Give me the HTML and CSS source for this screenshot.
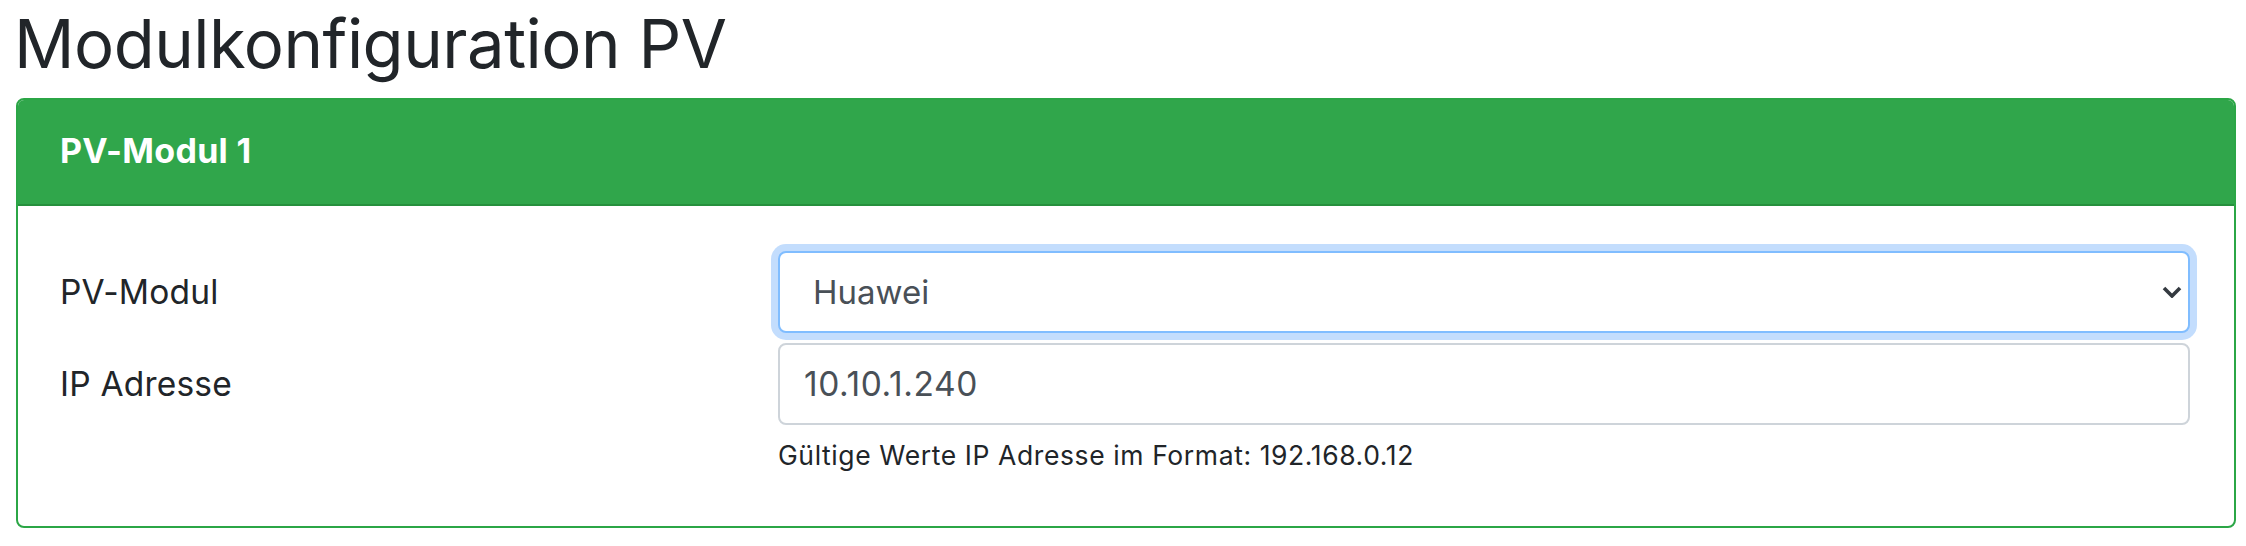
FILE: index.html
```html
<!DOCTYPE html>
<html lang="de">
<head>
<meta charset="utf-8">
<title>Modulkonfiguration PV</title>
<link rel="stylesheet" href="styles.css">
</head>
<body>
<div class="page">
  <h1 class="page-title">Modulkonfiguration PV</h1>
  <div class="card">
    <div class="card-header">PV-Modul 1</div>
    <div class="card-body">
      <div class="form-row">
        <label class="form-label" for="pvmodul">PV-Modul</label>
        <div class="form-field">
          <div class="select-wrap">
            <select id="pvmodul" class="form-select"><option>Huawei</option></select>
            <svg class="select-arrow" width="20" height="12" viewBox="0 0 20 12"><polyline points="2,2 10,10 18,2" fill="none" stroke="#343a40" stroke-width="3.6"/></svg>
          </div>
        </div>
      </div>
      <div class="form-row">
        <label class="form-label" for="ip">IP Adresse</label>
        <div class="form-field">
          <input id="ip" class="form-input" type="text" value="10.10.1.240">
          <small class="help">Gültige Werte IP Adresse im Format: 192.168.0.12</small>
        </div>
      </div>
    </div>
  </div>
</div>
</body>
</html>
```
FILE: styles.css
```css
* { box-sizing: border-box; }
html, body { margin: 0; background: #fff; }
body { font-family: Inter, "Liberation Sans", Arial, sans-serif; color: #212529; }
.page { padding: 0 10px 0 16px; }
.page-title { margin: 2px 0 12px -2px; font-size: 67px; font-weight: 400; letter-spacing: -0.5px; line-height: 84px; color: #212529; }
.card { border: 2px solid #2ba646; border-radius: 8px; overflow: hidden; }
.card-header { background: #30a64b; color: #fff; border-bottom: 2px solid #26903d; padding: 32px 42px 34px; font-size: 34px; font-weight: 700; letter-spacing: 0.3px; line-height: 38px; }
.card-body { padding: 45px 44px 56px 42px; }
.form-row { display: grid; grid-template-columns: 718px 1fr; }
.form-row + .form-row { margin-top: 10px; }
.form-label { height: 82px; display: flex; align-items: center; font-size: 33.5px; letter-spacing: 0.2px; }
.form-field { display: flex; flex-direction: column; }
.select-wrap { position: relative; }
.form-select, .form-input { display: block; width: 100%; height: 82px; border-radius: 8px; font-family: inherit; color: #495057; background: #fff; outline: none; margin: 0; }
.form-select { appearance: none; -webkit-appearance: none; border: 2px solid #80bdff; box-shadow: 0 0 0 7px #c3ddfd; padding: 0 60px 0 33px; font-size: 33px; }
.form-input { border: 2px solid #ced4da; padding: 0 24px; font-size: 33.5px; letter-spacing: 0.6px; }
.select-arrow { position: absolute; right: 8px; top: 35px; }
.help { display: block; margin-top: 15px; font-size: 26.5px; letter-spacing: 0.6px; line-height: 30px; color: #212529; }
```
